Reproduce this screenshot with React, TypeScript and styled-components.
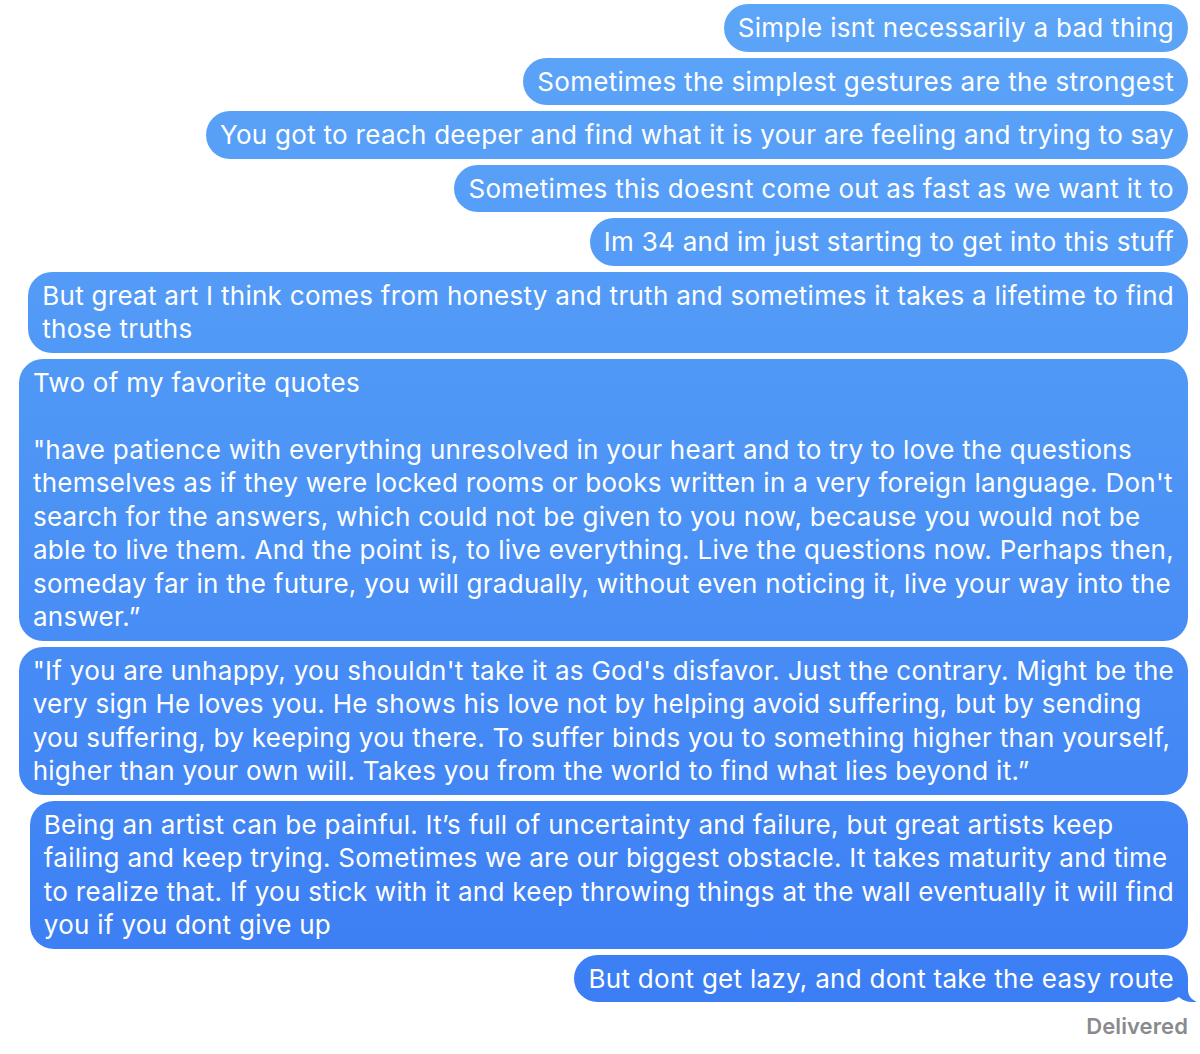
import React from 'react'
import styled, { createGlobalStyle } from 'styled-components'

const GlobalStyle = createGlobalStyle`
	html, body {
		margin: 0;
		padding: 0;
		background: #ffffff;
	}
	body {
		font-family: Inter, "Noto Sans", "Liberation Sans", sans-serif;
	}
`

const Thread = styled.div`
	display: flex;
	flex-direction: column;
	align-items: flex-end;
	gap: 6px;
	padding: 4px 12px 0 12px;
	width: 1200px;
	box-sizing: border-box;
`

const Bubble = styled.div<{ $tail?: boolean }>`
	position: relative;
	box-sizing: border-box;
	padding: 7px 14px 7px 14px;
	border-radius: 24px;
	color: #ffffff;
	font-size: 26px;
	line-height: 33.5px;
	letter-spacing: 0.28px;
	white-space: pre;
	background: linear-gradient(to bottom, #5da5f8 0px, #4f97f6 400px, #3a7bf4 1054px) fixed;

	${(p) =>
		p.$tail &&
		`
		&::before {
			content: '';
			position: absolute;
			right: -8px;
			bottom: 0;
			width: 22px;
			height: 24px;
			background: linear-gradient(to bottom, #5da5f8 0px, #4f97f6 400px, #3a7bf4 1054px) fixed;
			border-bottom-left-radius: 18px 16px;
		}
		&::after {
			content: '';
			position: absolute;
			right: -12px;
			bottom: 0;
			width: 12px;
			height: 26px;
			background: #ffffff;
			border-bottom-left-radius: 12px;
		}
	`}
`

const Status = styled.div`
	margin-top: 5px;
	font-size: 22px;
	font-weight: 600;
	color: #8a8a8e;
	letter-spacing: 0.1px;
`

const messages: string[] = [
	'Simple isnt necessarily a bad thing',
	'Sometimes the simplest gestures are the strongest',
	'You got to reach deeper and find what it is your are feeling and trying to say',
	'Sometimes this doesnt come out as fast as we want it to',
	'Im 34 and im just starting to get into this stuff',
	'But great art I think comes from honesty and truth and sometimes it takes a lifetime to find\nthose truths',
	'Two of my favorite quotes\n\n"have patience with everything unresolved in your heart and to try to love the questions\nthemselves as if they were locked rooms or books written in a very foreign language. Don\'t\nsearch for the answers, which could not be given to you now, because you would not be\nable to live them. And the point is, to live everything. Live the questions now. Perhaps then,\nsomeday far in the future, you will gradually, without even noticing it, live your way into the\nanswer.\u201d',
	'"If you are unhappy, you shouldn\'t take it as God\'s disfavor. Just the contrary. Might be the\nvery sign He loves you. He shows his love not by helping avoid suffering, but by sending\nyou suffering, by keeping you there. To suffer binds you to something higher than yourself,\nhigher than your own will. Takes you from the world to find what lies beyond it.\u201d',
	'Being an artist can be painful. It\u2019s full of uncertainty and failure, but great artists keep\nfailing and keep trying. Sometimes we are our biggest obstacle. It takes maturity and time\nto realize that. If you stick with it and keep throwing things at the wall eventually it will find\nyou if you dont give up',
	'But dont get lazy, and dont take the easy route',
]

export default function App() {
	return (
		<>
			<GlobalStyle />
			<Thread>
				{messages.map((m, i) => (
					<Bubble key={i} $tail={i === messages.length - 1}>
						{m}
					</Bubble>
				))}
				<Status>Delivered</Status>
			</Thread>
		</>
	)
}
